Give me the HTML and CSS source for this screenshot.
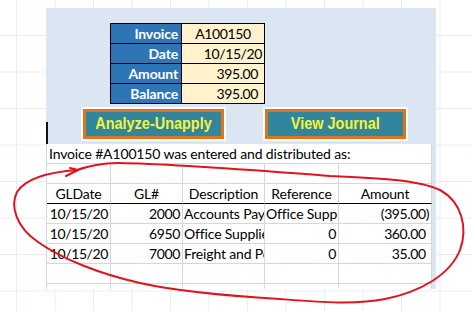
FILE: index.html
```html
<!DOCTYPE html>
<html>
<head>
<meta charset="utf-8">
<link rel="stylesheet" href="styles.css">
</head>
<body>
<div class="page">
  <div class="panel">
    <div class="top">
      <div class="info">
        <div class="lbl">Invoice</div><div class="val center">A100150</div>
        <div class="lbl">Date</div><div class="val">10/15/20</div>
        <div class="lbl">Amount</div><div class="val num">395.00</div>
        <div class="lbl">Balance</div><div class="val num">395.00</div>
      </div>
      <div class="buttons">
        <div class="btn"><span class="btn-text">Analyze-Unapply</span></div>
        <div class="btn"><span class="btn-text">View Journal</span></div>
      </div>
    </div>
    <div class="sheet">
      <div class="cell title">Invoice #A100150 was entered and distributed as:</div>
      <div class="cell"></div><div class="cell"></div><div class="cell"></div><div class="cell"></div><div class="cell"></div>
      <div class="cell head">GLDate</div><div class="cell head">GL#</div><div class="cell head">Description</div><div class="cell head">Reference</div><div class="cell head">Amount</div>
      <div class="cell r">10/15/20</div><div class="cell r">2000</div><div class="cell l">Accounts Payable</div><div class="cell l">Office Supplies</div><div class="cell r">(395.00)</div>
      <div class="cell r">10/15/20</div><div class="cell r">6950</div><div class="cell l">Office Supplies</div><div class="cell r">0</div><div class="cell r">360.00<span class="paren">)</span></div>
      <div class="cell r">10/15/20</div><div class="cell r">7000</div><div class="cell l">Freight and Postage</div><div class="cell r">0</div><div class="cell r">35.00<span class="paren">)</span></div>
      <div class="cell"></div><div class="cell"></div><div class="cell"></div><div class="cell"></div><div class="cell"></div>
      <div class="cell stub"></div><div class="cell stub"></div><div class="cell stub"></div><div class="cell stub"></div><div class="cell stub"></div>
    </div>
  </div>
  <svg class="scribble" width="472" height="311" viewBox="0 0 472 311">
    <path d="M 74,171 C 88,166 100,163 118,163 C 180,164 250,170 330,176 C 380,178 418,180 440,190 C 462,202 468,228 460,250 C 450,275 420,292 385,299 C 355,305 320,302 280,299 C 230,296 180,292 140,283 C 100,274 62,259 38,242 C 16,227 10,206 17,192 C 26,178 48,172 78,170" />
    <path d="M 66,176 L 78,170 L 70,168" />
  </svg>
</div>
</body>
</html>
```

FILE: styles.css
```css
html, body {
  margin: 0;
  padding: 0;
}

body {
  background-color: #ffffff;
  background-image:
    linear-gradient(to right, #e6edf6 1px, transparent 1px),
    linear-gradient(to bottom, #e6edf6 1px, transparent 1px);
  background-size: 38.5px 100%, 100% 36.5px;
  background-position: 16px 0, 0 35px;
}

.page {
  position: relative;
  width: 472px;
  height: 311px;
  overflow: hidden;
  padding: 8px 0 0 46px;
  box-sizing: border-box;
  font-family: Lato, "Open Sans", sans-serif;
  font-size: 14px;
  letter-spacing: -0.15px;
  color: #000;
}

.panel {
  width: 390px;
  height: 281px;
  background: #dce6f2;
  display: flex;
  flex-direction: column;
}

.top {
  position: relative;
  height: 136px;
  box-sizing: border-box;
  padding-top: 15px;
  display: flex;
  flex-direction: column;
}

.top::after {
  content: "";
  position: absolute;
  left: 0;
  bottom: 0;
  width: 1.5px;
  height: 22px;
  background: #111;
}

.info {
  margin-left: 64px;
  display: grid;
  grid-template-columns: 70px 82px;
  grid-auto-rows: 19px;
  gap: 1px;
  padding: 1px;
  background: #000;
  width: max-content;
}

.lbl {
  background: #2e75b6;
  color: #fff;
  font-weight: 700;
  text-align: right;
  padding-right: 3px;
  line-height: 19px;
}

.val {
  background: #fff2cc;
  text-align: right;
  padding-right: 2px;
  line-height: 19px;
  letter-spacing: -0.4px;
}

.val.center {
  text-align: center;
  padding-right: 0;
}

.val.num {
  padding-right: 6px;
}

.buttons {
  margin-top: 5px;
  margin-left: 37px;
  display: flex;
  gap: 41px;
}

.btn {
  width: 141px;
  height: 30px;
  box-sizing: border-box;
  border: 3px solid #e0731f;
  background: #31859c;
  box-shadow: 0 0 0 2px rgba(255, 255, 255, 0.85);
  display: flex;
  align-items: center;
  justify-content: center;
}

.btn-text {
  display: inline-block;
  font-family: "Liberation Sans", Arial, sans-serif;
  font-weight: 700;
  font-size: 17px;
  letter-spacing: 0;
  color: #f4f43a;
  transform: scaleX(0.85);
  white-space: nowrap;
}

.sheet {
  width: 386px;
  background: #fff;
  border-left: 1px solid #d0d7e5;
  box-sizing: border-box;
  display: grid;
  grid-template-columns: 64px 72px 82px 74px 93px;
  grid-template-rows: repeat(7, 20px) 5px;
}

.cell {
  box-sizing: border-box;
  border-right: 1px solid #d0d7e5;
  border-bottom: 1px solid #d0d7e5;
  line-height: 19px;
  white-space: nowrap;
  overflow: hidden;
}

.cell.stub {
  border-bottom: none;
}

.title {
  grid-column: 1 / -1;
  padding-left: 2px;
  overflow: visible;
}

.head {
  text-align: center;
  border-bottom: 1px solid #000;
}

.r {
  text-align: right;
  padding-right: 2px;
  letter-spacing: -0.4px;
}

.l {
  text-align: left;
  padding-left: 1px;
  text-overflow: clip;
}

.paren {
  visibility: hidden;
}

.scribble {
  position: absolute;
  left: 0;
  top: 0;
  pointer-events: none;
}

.scribble path {
  fill: none;
  stroke: #e0141c;
  stroke-width: 2;
  stroke-linecap: round;
  stroke-linejoin: round;
}
```
